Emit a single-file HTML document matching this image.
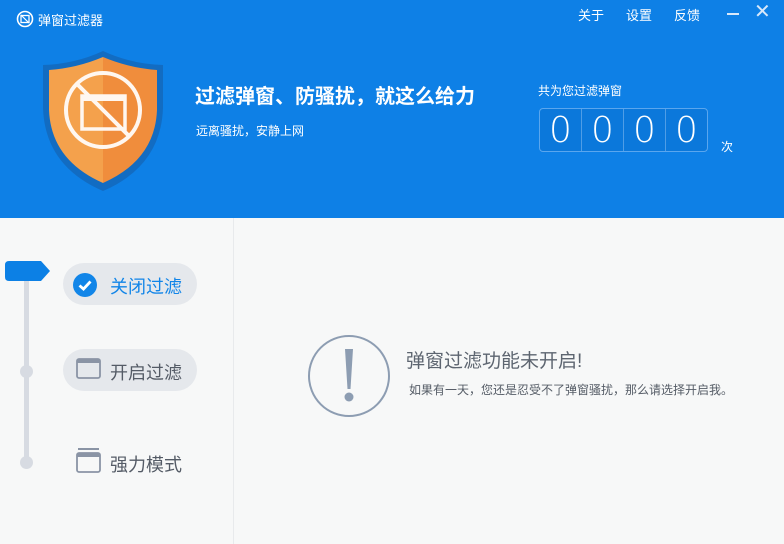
<!DOCTYPE html>
<html><head><meta charset="utf-8"><style>
*{margin:0;padding:0;box-sizing:border-box}
body{width:784px;height:544px;overflow:hidden;background:#f7f8f8;font-family:"Liberation Sans","Noto Sans CJK SC",sans-serif;position:relative}
.hd{position:absolute;left:0;top:0;width:784px;height:218px;background:#0e80e6;color:#fff}
.t{position:absolute;white-space:nowrap}
.digits{position:absolute;left:539px;top:108px;width:169px;height:44px;border:1px solid #5aa6ee;border-radius:4px;background:#0b78db;display:flex}
.digits div{flex:1;border-right:1px solid #4f9de6;text-align:center;font-size:36px;line-height:44px;color:#fff;font-family:"DejaVu Sans","Liberation Sans",sans-serif;font-weight:200}
.digits div:last-child{border-right:none}
.left{position:absolute;left:0;top:218px;width:234px;height:326px;border-right:1px solid #e8eaec;background:#f7f8f8}
.pill{position:absolute;left:63px;width:134px;height:42px;border-radius:21px;background:#e5e8ec}
</style></head><body>
<div class="hd">
<svg style="position:absolute;left:16px;top:10px" width="18" height="18" viewBox="0 0 18 18"><circle cx="9" cy="9" r="7.5" fill="none" stroke="#fff" stroke-width="1.6"/><rect x="5" y="5.5" width="8" height="7" fill="none" stroke="#fff" stroke-width="1.3"/><line x1="5" y1="5" x2="13" y2="13" stroke="#fff" stroke-width="1.2"/></svg>
<div class="t" style="left:38px;top:10px;font-size:13px">弹窗过滤器</div>
<div class="t" style="left:578px;top:5px;font-size:13px">关于</div>
<div class="t" style="left:626px;top:5px;font-size:13px">设置</div>
<div class="t" style="left:674px;top:5px;font-size:13px">反馈</div>
<div style="position:absolute;left:727px;top:13px;width:12px;height:2px;background:#d8e8fa"></div>
<div class="t" style="left:754px;top:-1px;font-size:20px;color:#d8e8fa">✕</div>
<svg style="position:absolute;left:40px;top:48px" width="126" height="146" viewBox="0 0 126 146">
<path d="M63 3 Q35 16 3 17 L3 60 Q5 118 63 143 Q121 118 123 60 L123 17 Q91 16 63 3Z" fill="#1466b9" opacity="0.8"/>
<path d="M63 9 Q37 20 9 22 L9 62 Q11 112 63 135Z" fill="#f4a14c"/>
<path d="M63 9 Q89 20 117 22 L117 62 Q115 112 63 135Z" fill="#f08d3c"/>
<circle cx="63" cy="62" r="37" fill="none" stroke="#fff7f0" stroke-width="4"/>
<rect x="42" y="48" width="43" height="33" fill="none" stroke="#fff7f0" stroke-width="3.5"/>
<rect x="42" y="48" width="43" height="5" fill="#fff7f0"/>
<line x1="37" y1="36" x2="89" y2="88" stroke="#fff7f0" stroke-width="4"/>
</svg>
<div class="t" style="left:195px;top:80px;font-size:20px;font-weight:bold">过滤弹窗、防骚扰，就这么给力</div>
<div class="t" style="left:196px;top:122px;font-size:12px">远离骚扰，安静上网</div>
<div class="t" style="left:538px;top:82px;font-size:12px">共为您过滤弹窗</div>
<div class="digits"><div>0</div><div>0</div><div>0</div><div>0</div></div>
<div class="t" style="left:721px;top:138px;font-size:12px">次</div>
</div>
<div class="left">
<div style="position:absolute;left:24px;top:50px;width:5px;height:196px;background:#d7dbe2;border-radius:2px"></div>
<div style="position:absolute;left:20px;top:147px;width:13px;height:13px;border-radius:50%;background:#d7dbe2"></div>
<div style="position:absolute;left:20px;top:238px;width:13px;height:13px;border-radius:50%;background:#d7dbe2"></div>
<svg style="position:absolute;left:5px;top:43px" width="46" height="26"><path d="M4 0 H36 L45 10 L36 20 H4 Q0 20 0 16 V4 Q0 0 4 0Z" fill="#0c80e5"/></svg>
<div class="pill" style="top:45px"></div>
<svg style="position:absolute;left:73px;top:55px" width="24" height="24"><circle cx="12" cy="12" r="12" fill="#1185e8"/><path d="M6.5 12.5 L10.5 16 L17.5 8.5" fill="none" stroke="#fff" stroke-width="2.8"/></svg>
<div class="t" style="left:110px;top:55px;font-size:18px;color:#1185e8">关闭过滤</div>
<div class="pill" style="top:131px"></div>
<svg style="position:absolute;left:76px;top:140px" width="25" height="22"><rect x="1" y="1" width="23" height="19" rx="2" fill="none" stroke="#8a94a5" stroke-width="1.8"/><rect x="1" y="1" width="23" height="4" fill="#8a94a5"/></svg>
<div class="t" style="left:110px;top:141px;font-size:18px;color:#545b66">开启过滤</div>
<svg style="position:absolute;left:76px;top:230px" width="25" height="25"><rect x="1" y="5" width="23" height="19" rx="2" fill="none" stroke="#8a94a5" stroke-width="1.8"/><rect x="1" y="5" width="23" height="4" fill="#8a94a5"/><rect x="2" y="0" width="21" height="2" fill="#8a94a5"/></svg>
<div class="t" style="left:110px;top:233px;font-size:18px;color:#545b66">强力模式</div>
</div>
<svg style="position:absolute;left:307px;top:334px" width="84" height="84"><circle cx="42" cy="42" r="40" fill="none" stroke="#8d9db2" stroke-width="2"/><path d="M38 15 H46 L43.5 55 H40.5Z" fill="#8d9db2"/><circle cx="42" cy="63" r="4.5" fill="#8d9db2"/></svg>
<div class="t" style="left:406px;top:346px;font-size:19px;color:#5d6570">弹窗过滤功能未开启!</div>
<div class="t" style="left:409px;top:381px;font-size:12px;color:#555c66">如果有一天，您还是忍受不了弹窗骚扰，那么请选择开启我。</div>
</body></html>
